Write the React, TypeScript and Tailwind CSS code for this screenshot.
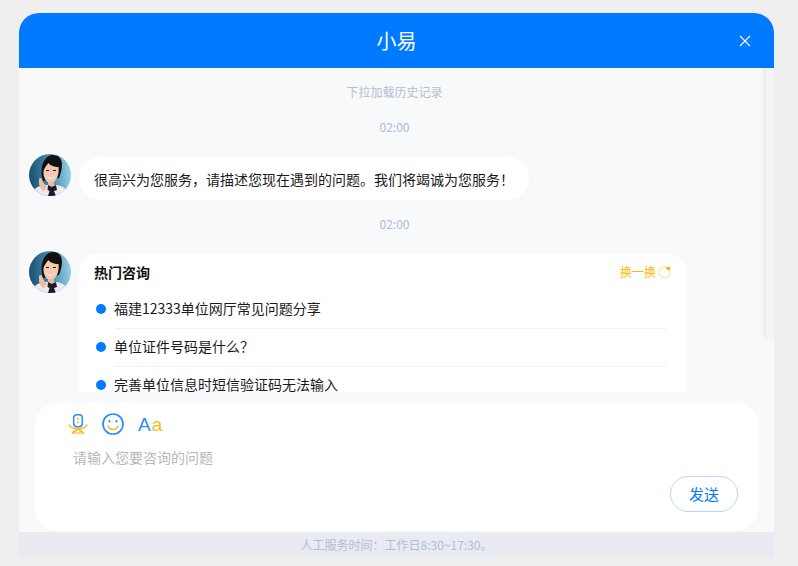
import { useId } from "react";

const hotList = [
  "福建12333单位网厅常见问题分享",
  "单位证件号码是什么？",
  "完善单位信息时短信验证码无法输入",
];

const Avatar = () => {
  const id = useId();
  return (
    <svg viewBox="0 0 42 42" className="w-[42px] h-[42px] shrink-0 rounded-full">
      <defs>
        <linearGradient id={id} x1="0" y1="0.4" x2="1" y2="0.3">
          <stop offset="0" stopColor="#1d4f70" />
          <stop offset="0.45" stopColor="#3a86ad" />
          <stop offset="1" stopColor="#9ad2e6" />
        </linearGradient>
      </defs>
      <rect width="42" height="42" fill={`url(#${id})`} />
      <path d="M2 42c2-7 6-10 14-11h12c6 1 10 4 12 11z" fill="#efe9f0" />
      <path d="M13 23c-2-12 3-22 11-22 6 0 9 4 9 10 0 5-2 10-3 13l-16 3z" fill="#15110e" />
      <path d="M14.500 17c1-3 3-6 5-8 1 2 5 4 10 4 1 7-2 16-8 16-4 0-7.500-5-7-12z" fill="#f3c9b4" />
      <path d="M19 28h6v4l-3 2-3-2z" fill="#e8b9a3" />
      <path d="M18 22c2 2.500 6 2.500 8 0-1 3.500-7 3.500-8 0z" fill="#fff" />
      <path d="M17 16.500h3M24 16.500h3" stroke="#2a1a14" strokeWidth="1" />
      <path d="M10 25c1-1.500 2.500-1 3 .5l2 4 3 3-3 5c-3-2-5.500-6-5-10z" fill="#eebda6" />
      <path d="M19 31l3.500 2 4.500-2 1 5-3 1 2 5h-8l1.500-5-2-1z" fill="#1b1d2c" />
    </svg>
  );
};

const HeadsetIcon = () => (
  <svg viewBox="0 0 20 20" className="w-[20px] h-[20px]" fill="none">
    <rect x="5.700" y="0.800" width="8.600" height="12" rx="3.200" stroke="#2b8cff" strokeWidth="1.500" />
    <rect x="9" y="4" width="2" height="1.800" fill="#fdb92c" />
    <rect x="9" y="7.500" width="2" height="1.800" fill="#fdb92c" />
    <path d="M0.800 10.500c1.500 3 4 4.300 9.200 4.300s7.700-1.300 9.200-4.300" stroke="#fdb92c" strokeWidth="1.600" />
    <path d="M4 19l6-4 6 4" stroke="#fdb92c" strokeWidth="1.700" />
    <path d="M4 19h12" stroke="#fdb92c" strokeWidth="1.200" />
  </svg>
);

const SmileIcon = () => (
  <svg viewBox="0 0 22 22" className="w-[22px] h-[22px]" fill="none">
    <circle cx="11" cy="11" r="10" stroke="#2b8cff" strokeWidth="1.700" />
    <rect x="6.500" y="7" width="2" height="2.500" rx="1" fill="#2b8cff" />
    <rect x="13.500" y="7" width="2" height="2.500" rx="1" fill="#2b8cff" />
    <path d="M6 13c1 2.500 3 3.500 5 3.500s4-1 5-3.500" stroke="#fdb92c" strokeWidth="1.600" strokeLinecap="round" />
  </svg>
);

const RefreshIcon = () => (
  <svg viewBox="0 0 13 13" className="w-[13px] h-[13px]" fill="none">
    <circle cx="6.500" cy="6.500" r="5.500" stroke="#ffdc7a" strokeWidth="1" />
    <rect x="8.500" y="1" width="3.500" height="3" fill="#ffb800" />
  </svg>
);

const App = () => {
  return (
    <div
      className="w-[798px] h-[566px] bg-[#efefef] pt-[13px] pl-[19px] overflow-hidden [text-spacing-trim:space-all]"
      style={{ fontFamily: '"Noto Sans CJK SC", "Liberation Sans", sans-serif' }}
    >
      <div className="w-[755px] h-[544px] flex flex-col bg-[#f8f9fb] rounded-t-[20px] relative">
        <header className="h-[55px] shrink-0 bg-[#007aff] rounded-t-[20px] flex items-center justify-center relative text-white text-[20px]">
          小易
          <svg viewBox="0 0 12 12" className="w-[12px] h-[12px] absolute left-[720px] top-[22px]" stroke="#fff" strokeWidth="1.100">
            <path d="M1 1l10 10M11 1L1 11" />
          </svg>
        </header>

        <div className="h-[324px] shrink-0 overflow-hidden w-[751px] relative">
          <p className="pt-[15px] leading-[18px] text-center text-xs text-[#b5bdd2]">下拉加载历史记录</p>
          <p className="mt-[17px] leading-[18px] text-center text-xs text-[#b0b9d0]">02:00</p>

          <div className="flex gap-2 px-[10px] mt-[18px]">
            <Avatar />
            <div className="mt-[3px] h-[43px] w-[450px] bg-white rounded-[22px] pl-[15px] flex items-center text-sm text-[#1a1a1a]">
              很高兴为您服务，请描述您现在遇到的问题。我们将竭诚为您服务！
            </div>
          </div>

          <p className="mt-[15px] leading-[18px] text-center text-xs text-[#b0b9d0]">02:00</p>

          <div className="flex gap-2 px-[10px] mt-[18px]">
            <Avatar />
            <div className="mt-[3px] w-[607px] h-[160px] bg-white rounded-t-[18px] px-[15px] pt-[10px]">
              <div className="flex items-center justify-between h-[18px]">
                <span className="text-sm font-bold text-[#111] -mt-[2px]">热门咨询</span>
                <span className="flex items-center gap-[2px] text-xs text-[#ffb800] -mt-[2px]">
                  换一换
                  <RefreshIcon />
                </span>
              </div>
              <ul className="mt-[9px]">
                {hotList.map((item, index) => (
                  <li key={index} className="flex items-center gap-2 h-[38px]">
                    <span className="w-[10px] h-[10px] rounded-full bg-[#007aff] shrink-0 ml-[2px] -mt-[2px]" />
                    <span className={`flex-1 h-full flex items-center pb-[4px] text-sm text-[#1a1a1a] mr-[5px] ${index < 2 ? "border-b border-[#f0f0f0]" : ""}`}>
                      {item}
                    </span>
                  </li>
                ))}
              </ul>
            </div>
          </div>
        </div>

        <div className="absolute left-[743px] top-[55px] w-[12px] h-[271px] pl-[4px]">
          <div className="w-[8px] h-full bg-[#f4f4f6] rounded-b-[6px] shadow-[-2px_0_4px_rgba(0,0,0,0.08)]" />
        </div>

        <div className="mt-[11px] mx-[16px] h-[128px] w-[723px] bg-white rounded-[22px] shrink-0 pt-[9px] pl-[38px] pr-[20px] flex flex-col">
          <div className="flex items-center gap-[14px] h-[24px] -ml-[5px]">
            <HeadsetIcon />
            <SmileIcon />
            <span className="text-[19px] leading-none tracking-[1px]" style={{ fontFamily: '"Liberation Sans", sans-serif' }}>
              <span className="text-[#2b8cff]">A</span>
              <span className="text-[#fdb92c]">a</span>
            </span>
          </div>
          <div className="mt-[10px] text-sm text-[#b8b8b8] leading-[22px]">请输入您要咨询的问题</div>
          <button className="mt-[8px] self-end w-[68px] h-[36px] rounded-full border border-[#b3d7ff] text-[15px] text-[#007aff] bg-white">
            发送
          </button>
        </div>

        <footer className="mt-[1px] h-[25px] flex-1 bg-[#e9eaf2] flex items-center justify-center text-xs text-[#b5bdd2]">
          人工服务时间：工作日8:30~17:30。
        </footer>
      </div>
    </div>
  );
};

export default App;
